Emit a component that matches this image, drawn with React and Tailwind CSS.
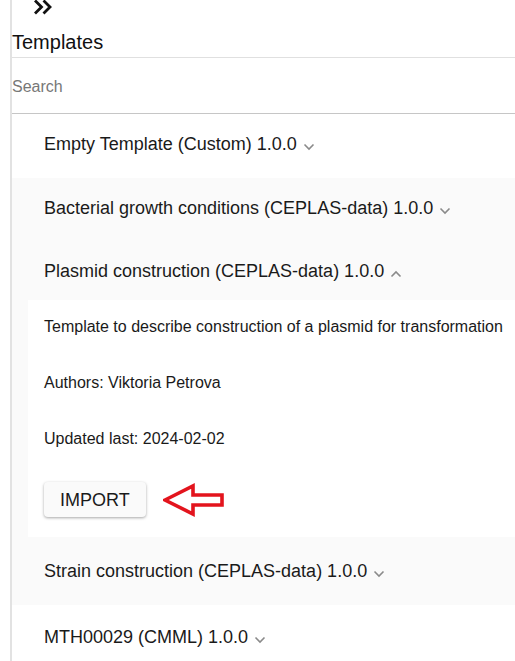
import React from 'react';

const templates = [
  { name: 'Empty Template (Custom) 1.0.0', shade: false, h: 'h-[64px] pb-[4px]' },
  { name: 'Bacterial growth conditions (CEPLAS-data) 1.0.0', shade: true, h: 'h-[64px] pb-[4px]' },
  {
    name: 'Plasmid construction (CEPLAS-data) 1.0.0',
    shade: true,
    h: 'h-[58px]',
    open: true,
    description: 'Template to describe construction of a plasmid for transformation',
    authors: 'Viktoria Petrova',
    updated: '2024-02-02'
  },
  { name: 'Strain construction (CEPLAS-data) 1.0.0', shade: true, h: 'h-[68px]' },
  { name: 'MTH00029 (CMML) 1.0.0', shade: false, h: 'h-[64px]' }
];

function Chevron({ up }) {
  return (
    <svg width="12" height="8" viewBox="0 0 12 8" className="ml-[6px] mt-[5px] shrink-0">
      <path
        d={up ? 'M1.5 6.5 L6 2 L10.5 6.5' : 'M1.5 1.5 L6 6 L10.5 1.5'}
        fill="none"
        stroke="#8a8a8a"
        strokeWidth="1.6"
      />
    </svg>
  );
}

function RedArrow() {
  return (
    <svg width="62" height="34" viewBox="0 0 62 34" className="shrink-0">
      <polygon
        points="2,17 30,3 30,12 59,12 59,22 30,22 30,31"
        fill="none"
        stroke="#e3141d"
        strokeWidth="3.6"
        strokeLinejoin="miter"
      />
    </svg>
  );
}

function TemplateItem({ t }) {
  return (
    <div className={t.shade ? 'bg-[#fafafa]' : 'bg-white'}>
      <div className={`flex items-center pl-[32px] ${t.h}`}>
        <span className="text-[18px] text-[#1a1a1a]">{t.name}</span>
        <Chevron up={t.open} />
      </div>
      {t.open && (
        <div className="ml-[16px] bg-white pl-[16px] pt-[15px] pb-[20px] text-[16px] leading-6 text-[#1a1a1a]">
          <p>{t.description}</p>
          <p className="mt-[32px]">Authors: {t.authors}</p>
          <p className="mt-[32px]">Updated last: {t.updated}</p>
          <div className="mt-[31px] flex items-center gap-[17px]">
            <button className="h-[35px] rounded-[4px] bg-[#fafafa] px-[16px] text-[18px] text-[#1a1a1a] shadow-[0_1px_3px_rgba(0,0,0,0.35)]">
              IMPORT
            </button>
            <RedArrow />
          </div>
        </div>
      )}
    </div>
  );
}

export default function App() {
  return (
    <div className="h-[661px] w-[515px] overflow-hidden bg-white font-['Liberation_Sans',Arial,sans-serif]">
      <div className="ml-[10px] min-h-full border-l-2 border-[#e2e2e2]">
        <div className="h-[15px] pl-[21px]">
          <svg width="20" height="15" viewBox="0 0 20 15">
            <path d="M2 0.5 L8.5 7 L2 13.5 M10.5 0.5 L17 7 L10.5 13.5" fill="none" stroke="#111" strokeWidth="2.8" />
          </svg>
        </div>
        <h2 className="pt-[15px] pb-[3px] text-[20px] leading-6 text-[#111]">Templates</h2>
        <input
          placeholder="Search"
          className="block h-[57px] w-full border-t border-b border-t-[#e0e0e0] border-b-[#c6c6c6] bg-white pt-[2px] text-[16px] outline-none placeholder:text-[#777]"
        />
        {templates.map((t) => (
          <TemplateItem key={t.name} t={t} />
        ))}
      </div>
    </div>
  );
}
